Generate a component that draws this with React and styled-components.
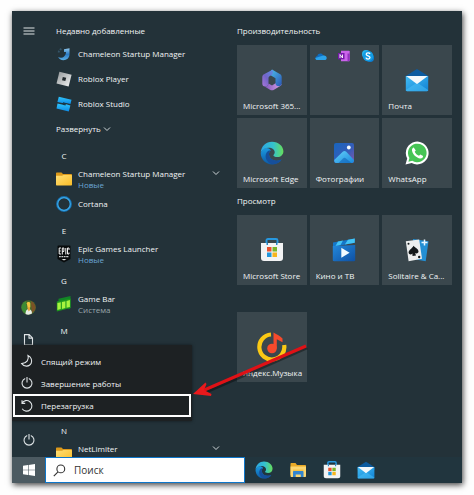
import React from 'react'
import styled, { createGlobalStyle } from "styled-components"

const GlobalStyle = createGlobalStyle`
    * {
        box-sizing: border-box;
    }
    body {
        margin: 0;
        background: #fefefe;
        font-family: "Open Sans", "Noto Sans", sans-serif;
        font-size: 8px;
        line-height: 11px;
        color: #f1f4f5;
    }
    button {
        border: 0;
        padding: 0;
        background: none;
        color: inherit;
        font: inherit;
        text-align: left;
        cursor: pointer;
    }
    h2, h3, ul {
        margin: 0;
        padding: 0;
        font: inherit;
        list-style: none;
    }
    svg {
        display: block;
        flex: none;
    }
`;

const Page = styled.div`
    display: flex;
    min-height: 100vh;
    padding: 11px 12px 12px;
`;

const Desktop = styled.div`
    position: relative;
    flex: 1;
    display: flex;
    flex-direction: column;
    background: #233239;
    box-shadow: 1px 2px 6px rgba(0, 0, 0, 0.75);
`;

const StartMenu = styled.div`
    position: relative;
    flex: 1 0 446px;
    height: 446px;
    display: grid;
    grid-template-columns: 33px 192px 1fr;
    overflow: hidden;
`;

const Rail = styled.nav`
    display: flex;
    flex-direction: column;
    padding: 3px 0 1px;
`;

const RailButton = styled.button`
    height: 33px;
    display: flex;
    align-items: center;
    justify-content: center;
    margin-top: ${(props) => (props.$push ? "auto" : "0")};
`;

const AppList = styled.ul`
    height: 446px;
    padding: 5px 8px 0 7px;
    overflow: hidden;
`;

const AppRow = styled.li`
    height: 25px;
    display: flex;
    align-items: center;
`;

const AppButton = styled.button`
    flex: 1;
    height: 22px;
    display: flex;
    align-items: center;
    gap: 6px;
    padding-left: 4px;
    padding-right: 9px;
`;

const AppText = styled.span`
    flex: 1;
    align-self: ${(props) => (props.$top ? "flex-start" : "center")};
`;

const AppNote = styled.span`
    display: block;
    color: ${(props) => (props.$fresh ? "#6ba6d6" : "#9aa5aa")};
`;

const FolderMark = styled.span`
    align-self: flex-start;
    padding-top: 1px;
`;

const ListTitle = styled.h2`
    padding: 3px 0 0 4px;
`;

const ExpandButton = styled.button`
    display: flex;
    align-items: center;
    gap: 2px;
    padding-left: 4px;
`;

const Letter = styled.button`
    width: 16px;
    margin-left: 4px;
    padding-top: 3px;
    text-align: center;
`;

const Tiles = styled.main`
    padding: 14px 10px 0 0;
`;

const TileTitle = styled.h3`
    line-height: 12px;
    min-height: 12px;
    margin-bottom: 8px;
`;

const TileGrid = styled.div`
    display: grid;
    grid-template-columns: repeat(3, 1fr);
    gap: 3px;
    margin-bottom: 7px;
`;

const Tile = styled.button`
    height: 70px;
    min-width: 0;
    display: grid;
    grid-template-rows: 1fr 15px;
    justify-items: center;
    padding: 0 6px;
    background: #3a474d;
`;

const TileIcon = styled.span`
    align-self: center;
    padding-top: 14px;
`;

const TileLabel = styled.span`
    justify-self: stretch;
    white-space: nowrap;
    margin-right: -4px;
`;

const FolderTile = styled.div`
    height: 70px;
    display: flex;
    justify-content: space-between;
    padding: 5px;
    background: #3a474d;
`;

const PowerMenu = styled.div`
    position: absolute;
    left: 0;
    bottom: 36px;
    width: 180px;
    height: 76px;
    padding: 5px 1px;
    background: #1d2123;
    box-shadow: 0 0 3px rgba(0, 0, 0, 0.5);
`;

const PowerItem = styled.button`
    width: 100%;
    height: ${(props) => (props.$selected ? "23px" : "22px")};
    display: flex;
    align-items: center;
    gap: 7px;
    padding-left: ${(props) => (props.$selected ? "5px" : "7px")};
    border: ${(props) => (props.$selected ? "2px solid #fff" : "0")};
`;

const Taskbar = styled.div`
    height: 26px;
    display: flex;
    background: #21353e;
`;

const StartButton = styled.button`
    width: 33px;
    display: flex;
    align-items: center;
    justify-content: center;
    background: #4c5a61;
`;

const SearchBox = styled.label`
    width: 200px;
    display: flex;
    align-items: center;
    gap: 8px;
    padding-left: 7px;
    background: #fff;
    border: 1px solid #0e76c9;
`;

const SearchInput = styled.input`
    flex: 1;
    min-width: 0;
    border: 0;
    padding: 0;
    outline: 0;
    background: none;
    font: inherit;
    font-size: 10px;
    line-height: 16px;
    color: #222;

    &::placeholder {
        color: #333;
        opacity: 1;
    }
`;

const Pinned = styled.div`
    display: flex;
    align-items: center;
    gap: 16px;
    padding-left: 10px;
`;

const ArrowLayer = styled.svg`
    position: absolute;
    left: 178px;
    top: 328px;
    pointer-events: none;
`;

// small line icons

function Line({ size = 14, children }) {
    return (
        <svg width={size} height={size} viewBox="0 0 14 14" fill="none" stroke="#dfe4e6" strokeWidth="1.1" aria-hidden="true">
            {children}
        </svg>
    )
}

const MenuIcon = () => <Line><path d="M1.5 4h11M1.5 7h11M1.5 10h11" /></Line>
const DocIcon = () => <Line><path d="M2.500 .6h4.700L10.500 3.900V11h-8z M7 .6v3.500h3.500" /></Line>
const PictureIcon = () => <Line><path d="M1.500 3h11v8h-11zM2 10l3-3 3 3 2-2 2 2" /></Line>
const GearIcon = () => <Line><circle cx="7" cy="7" r="4.500" /><circle cx="7" cy="7" r="1.500" /></Line>
const PowerIcon = () => <Line><path d="M5.200 2.500a5 5 0 1 0 3.600 0M7 1v5.500" /></Line>
const MoonIcon = () => <Line><path d="M8 1.600c1.200 3.600-1 7.700-6.300 8 2.600 3.600 7.800 3.200 9.500-.4 1.200-2.800 0-6.200-3.200-7.600z" /></Line>
const RestartIcon = () => <Line><path d="M2 4.200A5.300 5.300 0 1 1 2.200 9.800M2 1.200v3.200h3.200" /></Line>

const Chevron = () => (
    <svg width="8" height="8" viewBox="0 0 8 8" fill="none" stroke="#cfd6d9" aria-hidden="true">
        <path d="M1 2.500l3 3 3-3" />
    </svg>
)

const AvatarIcon = () => (
    <svg width="15" height="15" viewBox="0 0 15 15" aria-hidden="true">
        <circle cx="7.500" cy="7.500" r="7.300" fill="#4a6b2c" />
        <path d="M1 5a7 7 0 0 1 4-4l1 13a7 7 0 0 1-5-9z" fill="#3c8b34" />
        <path d="M10 1a7 7 0 0 1 4 9l-3 3z" fill="#7c5226" />
        <path d="M4.500 14c0-3 1-4.500 3-5 2.500.3 3.500 2 3.500 4.500-2 1.300-4.500 1.500-6.500.5z" fill="#e9ece6" />
        <path d="M5.800 3.200C6 1.500 9 1.400 9.300 3.400v3.400L8.500 9.500H7z" fill="#f0c53c" />
        <path d="M6.500 7.500l2.200-.5.4 3-1.500 1.500z" fill="#e3a338" />
    </svg>
)

const WindowsIcon = () => (
    <svg width="12" height="12" viewBox="0 0 12 12" fill="#fff" aria-hidden="true">
        <path d="M0 1.800l5-.7v4.600H0zM5.600 1L12 .1v5.600H5.600zM0 6.300h5v4.600l-5-.7zM5.600 6.300H12v5.600L5.600 11z" />
    </svg>
)

const SearchIcon = () => (
    <svg width="13" height="13" viewBox="0 0 13 13" fill="none" stroke="#333" strokeWidth="1.100" aria-hidden="true">
        <circle cx="7.800" cy="4.900" r="3.900" />
        <path d="M5 7.800L.8 12.200" />
    </svg>
)

// app logos

const ChameleonIcon = () => (
    <svg width="16" height="16" viewBox="0 0 16 16" aria-hidden="true">
        <defs>
            <linearGradient id="cham" x1="0" y1="0" x2="0" y2="1">
                <stop offset="0" stopColor="#8fc8ee" />
                <stop offset=".5" stopColor="#2b7ac4" />
                <stop offset="1" stopColor="#5aaee6" />
            </linearGradient>
        </defs>
        <path d="M8 3.200l5.500-.9V8c0 4.100-3 6.200-6 6.200-2.700 0-4.600-1.400-5.300-3.300 2 1.200 4.500.9 5.600-.1 1.300-1 2.200-2.400 2.200-4.700L8 6z" fill="url(#cham)" />
        <path d="M2.500 6.500A5.500 5.500 0 0 1 6 2.600" fill="none" stroke="#345468" strokeWidth="1.800" strokeDasharray="1.800 1" />
    </svg>
)

const RobloxIcon = () => (
    <svg width="16" height="16" viewBox="0 0 16 16" aria-hidden="true">
        <defs>
            <linearGradient id="rblx" x1="0" y1="0" x2="1" y2="1">
                <stop offset="0" stopColor="#8f9496" />
                <stop offset="1" stopColor="#f6f7f7" />
            </linearGradient>
        </defs>
        <path d="M3.400.8L15.600 3.700 12.600 15.400.5 12.500z" fill="url(#rblx)" />
        <path d="M6.800 5.900l3.400.8-.9 3.300-3.300-.8z" fill="#20282c" />
    </svg>
)

const StudioIcon = () => (
    <svg width="16" height="16" viewBox="0 0 16 16" aria-hidden="true">
        <defs>
            <linearGradient id="studio" x1="0" y1="0" x2="0" y2="1">
                <stop offset="0" stopColor="#30c4fb" />
                <stop offset="1" stopColor="#0c8be6" />
            </linearGradient>
        </defs>
        <path d="M2.800.7L15.500 3.700 14.500 8l-4.200-1-4 .1L1.400 6z" fill="url(#studio)" />
        <path d="M1.500 7.600l4.500 1 4.200-.3 4.200 1.200-1.600 6L.5 12.500z" fill="url(#studio)" />
        <path d="M7 6.300l3 .7-.5 2.400-3-.7z" fill="#17394b" />
    </svg>
)

const FolderIcon = () => (
    <svg width="16" height="16" viewBox="0 0 16 16" aria-hidden="true">
        <defs>
            <linearGradient id="fold" x1="0" y1="0" x2="1" y2="1">
                <stop offset="0" stopColor="#ffdf76" />
                <stop offset="1" stopColor="#f9bc27" />
            </linearGradient>
        </defs>
        <path d="M0 2.500c0-.6.4-1 1-1h4.500l1.500 1.500h8c.6 0 1 .4 1 1V8H0z" fill="#dc991b" />
        <path d="M0 4.800h6L7.500 4H15c.6 0 1 .4 1 1v8.500c0 .6-.4 1-1 1H1c-.6 0-1-.4-1-1z" fill="url(#fold)" />
    </svg>
)

const CortanaIcon = () => (
    <svg width="16" height="16" viewBox="0 0 16 16" fill="none" aria-hidden="true">
        <circle cx="8" cy="8" r="6.900" stroke="#1673b4" strokeWidth="2" />
        <circle cx="8" cy="8" r="6.300" stroke="#3ba8e8" strokeWidth="1.200" />
    </svg>
)

const EpicIcon = () => (
    <svg width="16" height="18" viewBox="0 0 16 18" aria-hidden="true">
        <path d="M1.500 1.500c0-.7.400-1 1-1h11c.6 0 1 .3 1 1V14L8 17.500 1.500 14z" fill="#080b0c" />
        <path d="M5 3H3.200v6H5M3.200 6h1.500M6.300 9.500V3h1.600v3.500H6.300M9.800 3v6.500M13 5V3h-1.500v6H13V7.500" fill="none" stroke="#f4f4f4" strokeWidth="1" />
        <path d="M3 11.700h10" stroke="#c9cccd" strokeWidth="1.200" strokeDasharray="1.800 .6" />
        <path d="M5.500 14h5L8 15.400z" fill="#e6e6e6" />
    </svg>
)

const GameBarIcon = () => (
    <svg width="16" height="16" viewBox="0 0 16 16" aria-hidden="true">
        <path d="M2.500 2.800L14.500 0v12l-2 1.500V3.700L2.500 6z" fill="#128526" />
        <path d="M.8 5.600L14.600 2.500v9.600L.8 15.400z" fill="#1e981f" />
        <path d="M1.400 7l3.400-.8v6.900l-3.400.8zM5.900 6l3.500-.8v6.800l-3.500.9zM10.500 4.900l3.400-.8V11l-3.400.8z" fill="#a6f33f" />
    </svg>
)

const OfficeIcon = () => (
    <svg width="22" height="22" viewBox="0 0 22 22" aria-hidden="true">
        <defs>
            <linearGradient id="off1" x1="1" y1="0" x2="0" y2="1">
                <stop offset="0" stopColor="#5a8fe4" />
                <stop offset=".55" stopColor="#7363c7" />
                <stop offset="1" stopColor="#a878da" />
            </linearGradient>
            <linearGradient id="off2" x1="0" y1="0" x2="1" y2="1">
                <stop offset="0" stopColor="#4ec4ee" />
                <stop offset="1" stopColor="#2b56b4" />
            </linearGradient>
            <linearGradient id="off3" x1="0" y1="0" x2="1" y2="0">
                <stop offset="0" stopColor="#7f55bd" />
                <stop offset="1" stopColor="#d9a2e6" />
            </linearGradient>
        </defs>
        <path d="M3.500 17.400c1.800.4 3.700-.8 4-2.900l3.500 2 3.500-2.200 6.200 1c-.2.700-.8 1.400-1.500 1.800l-6.200 3.600c-1.200.7-2.800.7-4 0z" fill="url(#off3)" />
        <path d="M11 .6L18.800 5c1.300.8 1.900 1.700 1.900 3.100v6.400c0 1.500-1.200 2.700-3 2.700s-3.200-1.200-3.200-3V9.300L7.500 5z" fill="url(#off2)" />
        <path d="M11.500.8L3 5.200C1.800 5.900 1.300 6.800 1.300 8v6.500c0 1.800 1 3 2.800 3 1.700 0 3.400-1.200 3.400-3V9.200c0-1 .5-1.700 1.300-2.200l2.200-1.300c1-1 1.500-3.500.5-4.900z" fill="url(#off1)" />
    </svg>
)

const EdgeIcon = ({ size = 24 }) => (
    <svg width={size} height={size} viewBox="0 0 24 24" aria-hidden="true">
        <defs>
            <linearGradient id="edge1" x1="0" y1="0" x2="1" y2="0">
                <stop offset="0" stopColor="#2ba4e4" />
                <stop offset=".55" stopColor="#35c2cd" />
                <stop offset="1" stopColor="#66de5b" />
            </linearGradient>
            <linearGradient id="edge2" x1="0" y1="0" x2="0" y2="1">
                <stop offset="0" stopColor="#1b9be2" />
                <stop offset="1" stopColor="#0c59a4" />
            </linearGradient>
        </defs>
        <path d="M.7 12C.8 18.600 6 23.400 12.200 23.400c4.300 0 7.700-2 9.500-4.800-4.500 2.400-11.700 1-12.700-4.600-.3-2 .6-3.700 1.800-4.800C7.800 5 2 7 .7 12z" fill="url(#edge2)" />
        <path d="M9 9.500c-3.500 1.500-4.500 6.500-2 10 1.500 2.200 3.700 3.700 6.500 3.800 3.500 0 6.500-2 8.200-4.700-5 2.400-11.700.8-12.600-4.500-.3-1.800.4-3.500 1.500-4.600z" fill="#164f9b" />
        <path d="M.7 11.500C1.200 5.200 6 .7 12 .7c6.600 0 11.400 4.500 11.400 9.500 0 3.500-2.700 5.800-6 5.800-2.500 0-4-.8-4-1.600 0-.6 1.300-1.200 1.300-3.200 0-2.400-2.500-4.400-6-4.400-3.700 0-6.500 1.700-8 4.700z" fill="url(#edge1)" />
    </svg>
)

const MailIcon = ({ size = 24 }) => (
    <svg width={size} height={size} viewBox="0 0 24 24" aria-hidden="true">
        <defs>
            <linearGradient id="mail" x1="0" y1="0" x2="1" y2="1">
                <stop offset="0" stopColor="#42bcf4" />
                <stop offset="1" stopColor="#1182d4" />
            </linearGradient>
        </defs>
        <path d="M.8 8L12 1l11.200 7v4H.8z" fill="#0d5b9f" />
        <path d="M.8 8h22.400v14c0 .8-.4 1.200-1.200 1.200H2c-.8 0-1.200-.4-1.200-1.200z" fill="url(#mail)" />
        <path d="M.8 22L12 14.500 23.200 22c0 .8-.4 1.200-1.200 1.200H2c-.8 0-1.200-.4-1.200-1.200z" fill="#4cc2f7" opacity=".5" />
        <path d="M1.200 8h21.600L12.800 15.600c-.6.400-1 .4-1.600 0z" fill="#f4f8fa" />
    </svg>
)

const CloudIcon = () => (
    <svg width="12" height="12" viewBox="0 0 12 12" aria-hidden="true">
        <path d="M2.300 6C3 3.300 6.700 2.700 8.200 5.200L11 7 8 10H2.500C-.2 9.700-.2 6.300 2.300 6z" fill="#0f6cbf" />
        <path d="M2.500 10C1 10 .3 9 .4 7.900L5 6.500l3.500-1c2-.2 3.200 1 3.200 2.400S10.700 10 9.700 10z" fill="#2ba2ea" />
    </svg>
)

const OneNoteIcon = () => (
    <svg width="12" height="12" viewBox="0 0 12 12" aria-hidden="true">
        <path d="M3 .8h8c.5 0 .7.300.7.700v9c0 .500-.2.700-.7.700H3z" fill="#ca64ea" />
        <path d="M9.500 3.500h2.200v7c0 .5-.2.700-.7.700H9.500z" fill="#9332bf" />
        <path d="M0 3h6.500v6.300H0z" fill="#7719aa" />
        <path d="M2 8V4.500L4.500 8V4.500" fill="none" stroke="#fff" strokeWidth=".9" />
    </svg>
)

const SkypeIcon = () => (
    <svg width="12" height="12" viewBox="0 0 12 12" aria-hidden="true">
        <circle cx="4" cy="4" r="4" fill="#26b4ec" />
        <circle cx="8" cy="8" r="4" fill="#0b7fd3" />
        <circle cx="6" cy="6" r="5.300" fill="#159ce3" />
        <path d="M8 4C7.500 2.600 4.200 2.500 4.200 4.300S8 5.700 8 7.600C8 9.500 4.300 9.500 3.900 7.700" fill="none" stroke="#fff" strokeWidth="1.300" />
    </svg>
)

const PhotosIcon = () => (
    <svg width="22" height="22" viewBox="0 0 22 22" aria-hidden="true">
        <defs>
            <linearGradient id="ph" x1="0" y1="0" x2="1" y2="1">
                <stop offset="0" stopColor="#1765bd" />
                <stop offset=".55" stopColor="#345db9" />
                <stop offset="1" stopColor="#8256a8" />
            </linearGradient>
            <linearGradient id="ph2" x1="0" y1="0" x2="1" y2="1">
                <stop offset="0" stopColor="#67d3fa" />
                <stop offset="1" stopColor="#1786dc" />
            </linearGradient>
        </defs>
        <rect x="1" y="1" width="20" height="20" rx="2" fill="url(#ph)" />
        <path d="M1.200 18L10 9.600c1-.9 2-.9 3 0l8 8.400c0 2-.8 3-2 3H3c-1 0-1.800-1-1.800-3z" fill="url(#ph2)" />
        <path d="M10 16.500c1-.9 2-.9 3 0l5.500 4.500h-13z" fill="#1264b8" opacity=".6" />
        <circle cx="15.800" cy="5.500" r="1.900" fill="#f4fbff" />
    </svg>
)

const WhatsAppIcon = () => (
    <svg width="24" height="24" viewBox="0 0 24 24" aria-hidden="true">
        <path d="M.5 23.500l1.700-6A11.400 11.400 0 1 1 6.700 22z" fill="#fff" />
        <path d="M3.400 20.700l1-3.800A9.300 9.300 0 1 1 7.300 19.800z" fill="#46c455" />
        <path d="M8.700 6.400c-1.400.5-2 2-1.600 3.600 1 3.800 4.300 6.900 8 7.500 1.600.2 2.900-.7 3-2.500l-2.800-1.600-1.300 1.300c-2-.7-3.400-2-4.300-4l1.100-1.200z" fill="#fff" />
    </svg>
)

const StoreIcon = ({ size = 24 }) => (
    <svg width={size} height={size} viewBox="0 0 24 24" aria-hidden="true">
        <path d="M6.500 7V2.500c0-1 .5-1.500 1.500-1.500h8c1 0 1.500.5 1.500 1.500V7" fill="none" stroke="#2798df" strokeWidth="1.900" />
        <path d="M1 5h22v15c0 2-1 3-3 3H4c-2 0-3-1-3-3z" fill="#f2f3f4" />
        <path d="M6.500 5v2h1.500V5M16 5v2h1.500V5" fill="#2386c7" />
        <path d="M7 9h4.500v4.500H7z" fill="#ea4f2c" />
        <path d="M12.500 9H17v4.500h-4.500z" fill="#78b52b" />
        <path d="M7 14.500h4.500V19H7z" fill="#2196dc" />
        <path d="M12.500 14.500H17V19h-4.500z" fill="#f7b51c" />
    </svg>
)

const MoviesIcon = () => (
    <svg width="24" height="24" viewBox="0 0 24 24" aria-hidden="true">
        <defs>
            <linearGradient id="mov" x1="0" y1="0" x2="1" y2="1">
                <stop offset="0" stopColor="#2389dc" />
                <stop offset="1" stopColor="#0e50a3" />
            </linearGradient>
        </defs>
        <path d="M1 4.500L22.800.5v4.300L1 9z" fill="#1577c9" />
        <path d="M6 3.600L11 2.600 8.500 7l-5 1zM16 1.700l6.800-1.200v4.300l-10 1.600z" fill="#43c4f5" />
        <path d="M.8 8l22.400-1v15c0 .8-.4 1.200-1.200 1.200H2c-.8 0-1.200-.4-1.200-1.200z" fill="url(#mov)" />
        <path d="M9.300 9.800l8.300 5-8.300 5z" fill="#f2fbff" />
    </svg>
)

const SolitaireIcon = () => (
    <svg width="24" height="24" viewBox="0 0 24 24" aria-hidden="true">
        <path d="M8 1l15.500 2.200-2.800 20L8 21z" fill="#238fd4" />
        <path d="M.8 3.300L14.200 1.500l2.800 19.200L3.600 23.200z" fill="#eceeee" />
        <path d="M8.500 7.800c1.500 2 4.800 3 5 5.500.1 2-2 2.800-3.300 1.700l.8 2.500-3.500.6-.1-2.500c-1 1.300-3.500 1.200-3.800-.8-.3-2.500 3.800-4.500 4.900-7z" fill="#14191b" />
        <circle cx="3.500" cy="5.700" r="1" fill="#14191b" />
        <circle cx="14.200" cy="19" r="1.200" fill="#14191b" />
        <path d="M19.500 1.500v6M16.500 4.500h6" stroke="#e8f6ff" strokeWidth="1.500" />
    </svg>
)

const MusicIcon = () => (
    <svg width="30" height="32" viewBox="0 0 30 32" aria-hidden="true">
        <path d="M14 3.500A12.500 12.500 0 1 0 27.200 14" fill="none" stroke="#fbc914" strokeWidth="4.200" />
        <circle cx="15" cy="17.500" r="4.800" fill="#f64a2c" />
        <path d="M16.500 1.500v16h3.300V8.200l5.700 3V7.500c-2.500-2.500-5.500-4-9-6z" fill="#f64a2c" />
    </svg>
)

const ExplorerIcon = () => (
    <svg width="18" height="18" viewBox="0 0 18 18" aria-hidden="true">
        <path d="M1.500 3c0-.6.300-1 1-1h4l1.500 2h8c.6 0 1 .3 1 1v9h-15.500z" fill="#e9a926" />
        <path d="M1.500 5.500h15.500V15c0 .6-.3 1-1 1H2.500c-.6 0-1-.4-1-1z" fill="#fbd671" />
        <path d="M4 16v-5c0-.6.4-1 1-1h8.500c.6 0 1 .4 1 1v5h-2.700v-2.500H6.700V16z" fill="#3385cf" />
        <path d="M4 8.500h10.500v1.500H4z" fill="#f7c344" />
    </svg>
)

const rows = [
    { title: "Недавно добавленные" },
    { name: "Chameleon Startup Manager", icon: <ChameleonIcon /> },
    { name: "Roblox Player", icon: <RobloxIcon /> },
    { name: "Roblox Studio", icon: <StudioIcon /> },
    { expand: "Развернуть" },
    { letter: "C" },
    { name: "Chameleon Startup Manager", note: "Новые", fresh: true, icon: <FolderIcon />, folder: true },
    { name: "Cortana", icon: <CortanaIcon /> },
    { letter: "E" },
    { name: "Epic Games Launcher", note: "Новые", fresh: true, icon: <EpicIcon /> },
    { letter: "G" },
    { name: "Game Bar", note: "Система", icon: <GameBarIcon /> },
    { letter: "M" },
    {},
    {},
    {},
    { letter: "N" },
    { name: "NetLimiter", icon: <FolderIcon />, folder: true },
]

function Row({ row }) {
    return (
        <AppRow>
            {row.title && <ListTitle>{row.title}</ListTitle>}
            {row.letter && <Letter>{row.letter}</Letter>}
            {row.expand && <ExpandButton>{row.expand}<Chevron /></ExpandButton>}
            {row.name && (
                <AppButton>
                    {row.icon}
                    <AppText $top={row.folder}>
                        {row.name}
                        {row.note && <AppNote $fresh={row.fresh}>{row.note}</AppNote>}
                    </AppText>
                    {row.folder && <FolderMark><Chevron /></FolderMark>}
                </AppButton>
            )}
        </AppRow>
    )
}

function AppTile({ icon, label }) {
    return (
        <Tile>
            <TileIcon>{icon}</TileIcon>
            <TileLabel>{label}</TileLabel>
        </Tile>
    )
}

function App() {
    return (
        <Page>
            <GlobalStyle />
            <Desktop>
                <StartMenu>
                    <Rail>
                        <RailButton aria-label="Меню"><MenuIcon /></RailButton>
                        <RailButton $push aria-label="Учетная запись"><AvatarIcon /></RailButton>
                        <RailButton aria-label="Документы"><DocIcon /></RailButton>
                        <RailButton aria-label="Изображения"><PictureIcon /></RailButton>
                        <RailButton aria-label="Параметры"><GearIcon /></RailButton>
                        <RailButton aria-label="Выключение"><PowerIcon /></RailButton>
                    </Rail>
                    <AppList>
                        {rows.map((row, i) => <Row key={i} row={row} />)}
                    </AppList>
                    <Tiles>
                        <TileTitle>Производительность</TileTitle>
                        <TileGrid>
                            <AppTile icon={<OfficeIcon />} label="Microsoft 365..." />
                            <FolderTile>
                                <CloudIcon />
                                <OneNoteIcon />
                                <SkypeIcon />
                            </FolderTile>
                            <AppTile icon={<MailIcon />} label="Почта" />
                            <AppTile icon={<EdgeIcon />} label="Microsoft Edge" />
                            <AppTile icon={<PhotosIcon />} label="Фотографии" />
                            <AppTile icon={<WhatsAppIcon />} label="WhatsApp" />
                        </TileGrid>
                        <TileTitle>Просмотр</TileTitle>
                        <TileGrid>
                            <AppTile icon={<StoreIcon />} label="Microsoft Store" />
                            <AppTile icon={<MoviesIcon />} label="Кино и ТВ" />
                            <AppTile icon={<SolitaireIcon />} label="Solitaire & Ca..." />
                        </TileGrid>
                        <TileTitle />
                        <TileGrid>
                            <AppTile icon={<MusicIcon />} label="Яндекс.Музыка" />
                        </TileGrid>
                    </Tiles>
                    <PowerMenu>
                        <PowerItem><MoonIcon />Спящий режим</PowerItem>
                        <PowerItem><PowerIcon />Завершение работы</PowerItem>
                        <PowerItem $selected><RestartIcon />Перезагрузка</PowerItem>
                    </PowerMenu>
                    <ArrowLayer width="120" height="66" viewBox="0 0 120 66" aria-hidden="true">
                        <path d="M117 9L12 55" opacity=".35" stroke="#000" strokeWidth="3" />
                        <path d="M116 7L12 52" stroke="#df1116" strokeWidth="3" />
                        <path d="M3 55l12.500-11.500 1 1.500-2.500 6 7.500 4-.5 2z" fill="#e8191c" />
                    </ArrowLayer>
                </StartMenu>
                <Taskbar>
                    <StartButton aria-label="Пуск"><WindowsIcon /></StartButton>
                    <SearchBox>
                        <SearchIcon />
                        <SearchInput type="search" placeholder="Поиск" aria-label="Поиск" />
                    </SearchBox>
                    <Pinned>
                        <button aria-label="Microsoft Edge"><EdgeIcon size={18} /></button>
                        <button aria-label="Проводник"><ExplorerIcon /></button>
                        <button aria-label="Microsoft Store"><StoreIcon size={18} /></button>
                        <button aria-label="Почта"><MailIcon size={18} /></button>
                    </Pinned>
                </Taskbar>
            </Desktop>
        </Page>
    )
}

export default App
